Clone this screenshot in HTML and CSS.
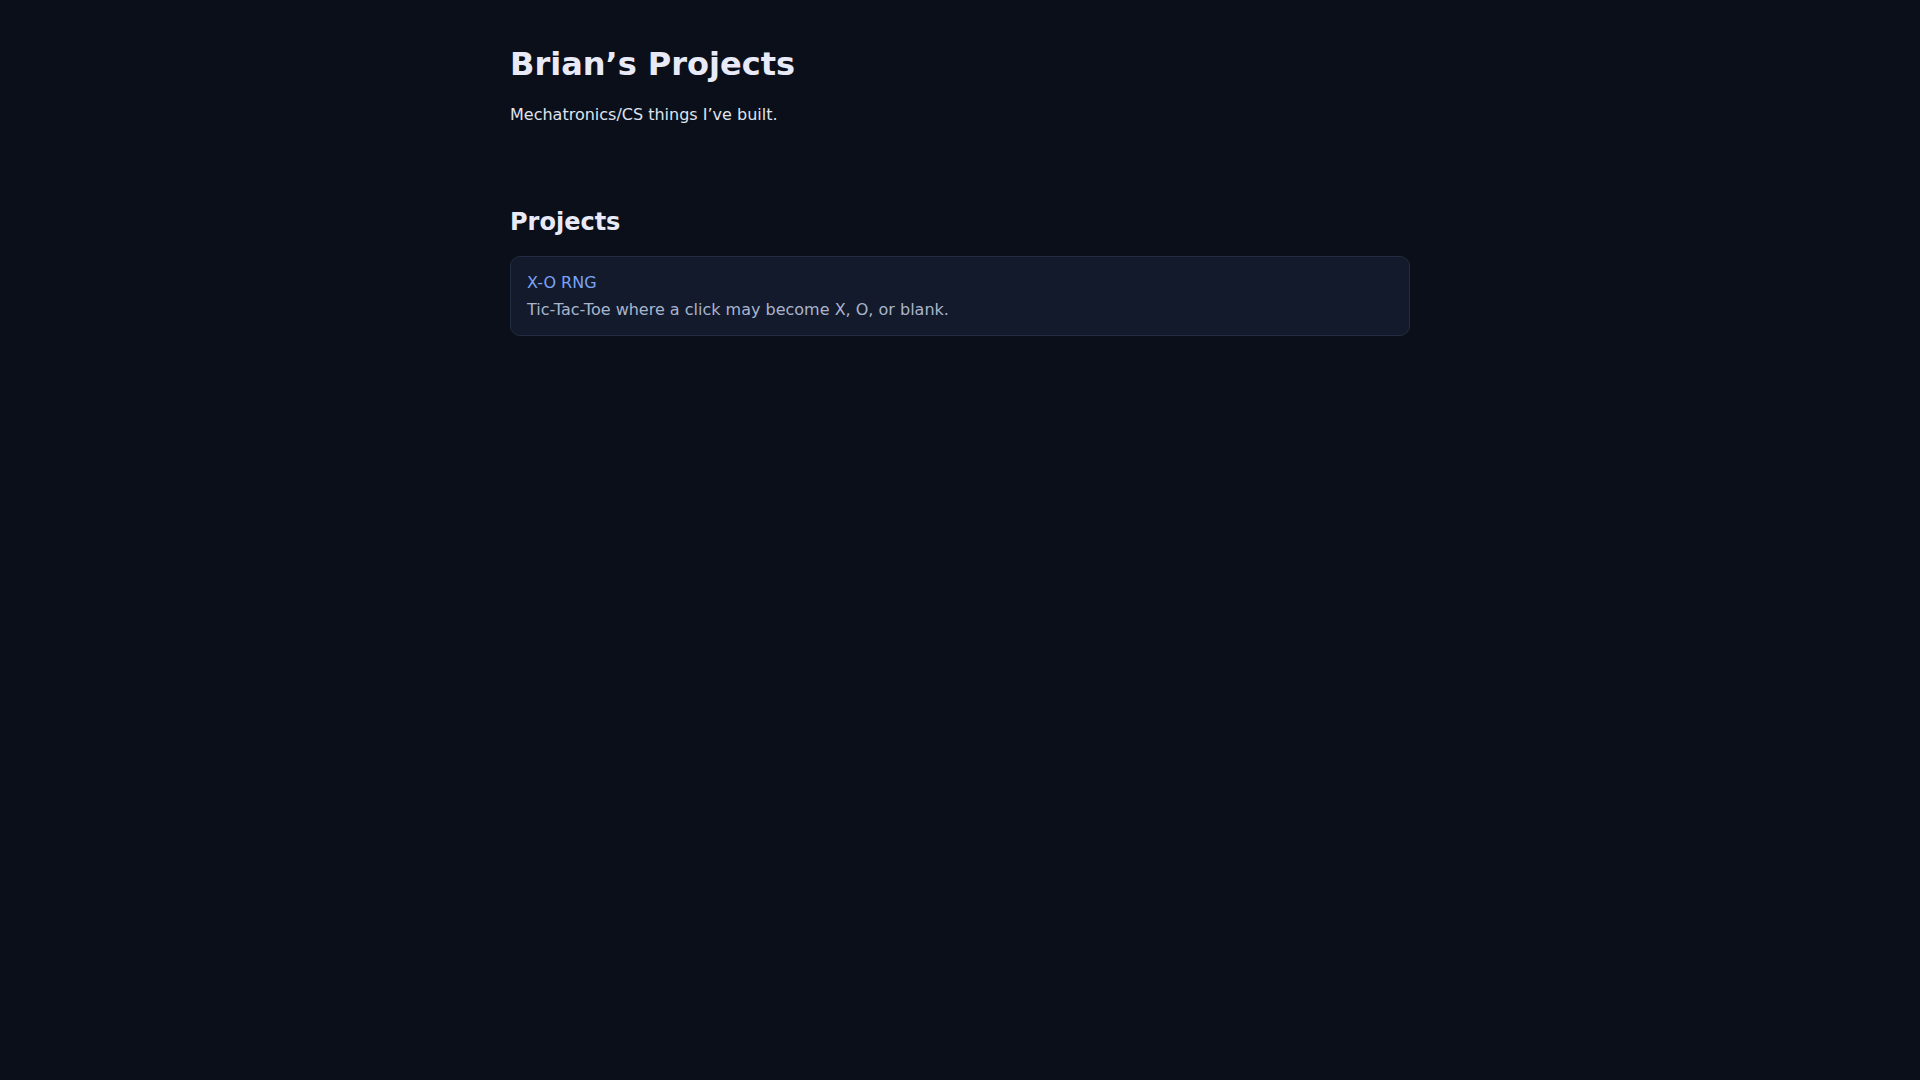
FILE: index.html
```html
<!DOCTYPE html>
<html lang="en">
<head>
<meta charset="utf-8">
<title>Brian's Projects</title>
<link rel="stylesheet" href="styles.css">
</head>
<body>
<main class="page">
  <header class="intro">
    <h1 class="title">Brian’s Projects</h1>
    <p class="subtitle">Mechatronics/CS things I’ve built.</p>
  </header>
  <section class="projects">
    <h2 class="section-title">Projects</h2>
    <div class="card">
      <a class="card-title" href="#">X-O RNG</a>
      <p class="card-desc">Tic-Tac-Toe where a click may become X, O, or blank.</p>
    </div>
  </section>
</main>
</body>
</html>
```
FILE: styles.css
```css
html, body {
  margin: 0;
  background: #0b0f19;
  color: #e6e9f5;
  font-family: "DejaVu Sans", sans-serif;
  min-height: 100%;
}
.page {
  max-width: 900px;
  margin: 0 auto;
  padding: 45px 0 40px;
}
.title {
  font-size: 32px;
  line-height: 38px;
  font-weight: bold;
  margin: 0 0 20px;
  color: #e8ebf7;
}
.subtitle {
  font-size: 16px;
  line-height: 24px;
  margin: 0;
  color: #dfe3ef;
}
.projects {
  margin-top: 81px;
}
.section-title {
  font-size: 24px;
  line-height: 29px;
  font-weight: bold;
  margin: 0 0 19px;
  color: #e8ebf7;
}
.card {
  background: #131a2b;
  border: 1px solid #222c42;
  border-radius: 10px;
  padding: 14px 16px 13px;
  display: flex;
  flex-direction: column;
  gap: 3px;
}
.card-title {
  font-size: 16px;
  line-height: 24px;
  color: #7aa2f7;
  text-decoration: none;
}
.card-desc {
  font-size: 16px;
  line-height: 24px;
  margin: 0;
  color: #a9b4cc;
}
```
